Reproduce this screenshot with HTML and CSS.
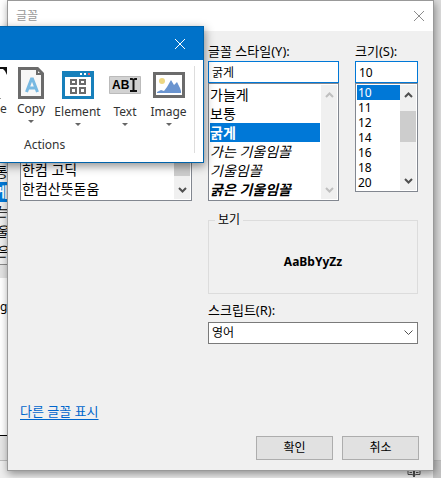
FILE: index.html
```
<!DOCTYPE html>
<html lang="ko">
<head>
<meta charset="utf-8">
<title>글꼴</title>
<link rel="stylesheet" href="styles.css">
</head>
<body>
<div class="desktop">
  <div class="behind" aria-hidden="true">
    <div class="behind-list">
      <span>통</span><span class="picked">게</span><span class="slant">는</span><span class="slant">울</span><span class="slant">은</span>
    </div>
    <div class="behind-band"></div>
    <div class="behind-page">g</div>
    <div class="behind-foot"></div>
    <div class="behind-status">
      <svg width="14" height="13" viewBox="0 0 14 13" fill="none" stroke="#505050"><path d="M1 1.500h4l2 1 2-1h4v9H9l-2 1-2-1H1zM2.500 4.500H5M2.500 6.500H5M2.500 8.500H5M9 4.500h2.500M9 6.500h2.500M9 8.500h2.500"/><path d="M7 2v11" stroke-width="2"/></svg>
    </div>
  </div>

  <main class="dialog">
    <header class="titlebar">
      <h1>글꼴</h1>
      <button class="close" aria-label="닫기"><svg width="12" height="12" viewBox="0 0 12 12" stroke="#8c8c8c"><path d="M1 1l10 10M11 1L1 11"/></svg></button>
    </header>
    <form class="body">
      <div class="columns">
        <div class="fonts">
          <ul class="list fonts-list">
            <li>한컴 고딕</li>
            <li>한컴산뜻돋움</li>
          </ul>
          <div class="scroll"><i class="thumb fonts-thumb"></i><svg class="down" width="9" height="6" viewBox="0 0 9 6"><path d="M1 1l3.500 3.500L8 1"/></svg></div>
        </div>
        <div class="field style-field">
          <label for="style">글꼴 스타일(Y):</label>
          <input id="style" value="굵게">
          <div class="listbox">
            <ul class="list">
              <li>가늘게</li>
              <li>보통</li>
              <li class="selected bold">굵게</li>
              <li class="slant">가는 기울임꼴</li>
              <li class="slant">기울임꼴</li>
              <li class="slant bold">굵은 기울임꼴</li>
            </ul>
            <div class="scroll disabled"><svg width="9" height="6" viewBox="0 0 9 6"><path d="M1 5l3.500-3.500L8 5"/></svg><svg class="down" width="9" height="6" viewBox="0 0 9 6"><path d="M1 1l3.500 3.500L8 1"/></svg></div>
          </div>
        </div>
        <div class="field size-field">
          <label for="size">크기(S):</label>
          <input id="size" value="10">
          <div class="listbox">
            <ul class="list sizes">
              <li class="selected">10</li><li>11</li><li>12</li><li>14</li><li>16</li><li>18</li><li>20</li>
            </ul>
            <div class="scroll"><svg width="9" height="6" viewBox="0 0 9 6"><path d="M1 5l3.500-3.500L8 5"/></svg><i class="thumb size-thumb"></i><svg class="down" width="9" height="6" viewBox="0 0 9 6"><path d="M1 1l3.500 3.500L8 1"/></svg></div>
          </div>
        </div>
      </div>
      <div class="lower">
        <fieldset class="preview">
          <legend>보기</legend>
          <p>AaBbYyZz</p>
        </fieldset>
        <label for="script">스크립트(R):</label>
        <div class="combo">
          <select id="script"><option>영어</option></select>
          <svg width="9" height="6" viewBox="0 0 9 6" fill="none" stroke="#505050"><path d="M.5.500l4 4 4-4"/></svg>
        </div>
      </div>
      <a class="more" href="#">다른 글꼴 표시</a>
      <div class="actions">
        <button type="button">확인</button>
        <button type="button">취소</button>
      </div>
    </form>
  </main>

  <section class="toolbox" aria-label="Actions">
    <header class="toolbox-bar">
      <button class="close" aria-label="Close"><svg width="12" height="12" viewBox="0 0 12 12" stroke="#fff"><path d="M1 1l10 10M11 1L1 11"/></svg></button>
    </header>
    <div class="group">
      <div class="tools">
        <button class="tool cut">
          <i class="pic"><svg width="7" height="32" viewBox="0 0 7 32"><path d="M0 0h7v8L5 4 3 2H0z" fill="#111"/><path d="M0 31.500h1" stroke="#999"/></svg></i>
          <span>e</span>
        </button>
        <button class="tool copy">
          <i class="pic"><svg width="26" height="32" viewBox="0 0 26 32"><path d="M1.500 1.500h18l5 5v24h-23z" fill="#f7f7f7" stroke="#6b6b6b" stroke-width="3"/><path d="M19 1v6h6" fill="none" stroke="#6b6b6b" stroke-width="2"/><path d="M8.500 25l5-13h1l5 13M10.500 21h7" fill="none" stroke="#78b9e2" stroke-width="3"/></svg></i>
          <span>Copy</span><i class="caret"></i>
        </button>
        <button class="tool">
          <i class="pic"><svg width="32" height="28" viewBox="0 0 32 28"><path d="M0 0h32v28H0z" fill="#1780bb"/><path d="M3 6h26v19H3z" fill="#fff"/><path d="M18 2h2v2h-2zM22 2h2v2h-2z" fill="#fff"/><path d="M26 2h2v2h-2z" fill="#ef5b66"/><path d="M9 9h5v4H9zM18 9h5v4h-5zM9 17h5v5H9zM18 17h5v5h-5z" fill="none" stroke="#6b6b6b" stroke-width="2"/></svg></i>
          <span>Element</span><i class="caret"></i>
        </button>
        <button class="tool">
          <i class="pic"><svg width="32" height="18" viewBox="0 0 32 18"><path d="M.5.500h31v17H.5z" fill="#d2d2d2" stroke="#bbb"/><text x="3" y="13" class="abi">AB</text><path d="M21 3h2l1.500 1L26 3h2M24.500 4v10M21 15h2l1.500-1 1.500 1h2" fill="none" stroke="#111" stroke-width="2"/></svg></i>
          <span>Text</span><i class="caret"></i>
        </button>
        <button class="tool">
          <i class="pic"><svg width="32" height="26" viewBox="0 0 32 26"><path d="M1.500 1.500h29v23h-29z" fill="#fff" stroke="#6b6b6b" stroke-width="3"/><circle cx="9" cy="9" r="3" fill="#edd782"/><path d="M4 21v-1l4-2 3 1 3-4 4-7 3 5 3-3 3 6 1 3v2z" fill="#6a94cf"/></svg></i>
          <span>Image</span><i class="caret"></i>
        </button>
      </div>
      <p class="group-name">Actions</p>
    </div>
  </section>
</div>
</body>
</html>
```
FILE: styles.css
```
* { box-sizing: border-box; }
body {
  margin: 0;
  font: 12px/16px "Noto Sans", "Noto Sans CJK KR", sans-serif;
  color: #000;
}
button, input, select { font: inherit; color: inherit; }
ul { margin: 0; padding: 0; list-style: none; }
h1, p { margin: 0; font-weight: 400; }
h1 { font-size: 12px; }

.desktop { position: relative; min-height: 100vh; overflow: hidden; }

.behind { display: flex; flex-direction: column; height: 100vh; padding-top: 162px; background: linear-gradient(90deg, #fff 0 50%, #dcdcdc 50%); }
.behind-list { width: 8px; height: 103px; overflow: hidden; background: #eee; border-bottom: 1px solid #888; font-size: 14px; }
.behind-list span { display: flex; justify-content: flex-end; height: 20px; align-items: center; }
.behind-list .picked { background: #0078d7; color: #fff; font-weight: 700; }
.behind-band { width: 8px; height: 13px; background: #e2e2e2; }
.behind-page { flex: 1; width: 8px; padding-top: 21px; }
.behind-foot { width: 8px; height: 25px; background: #e6e6e6; border-top: 1px solid #000; }
.behind-status { display: flex; justify-content: flex-end; align-items: flex-end; height: 18px; padding: 0 20px 1px; border-top: 1px solid #bbb; background: linear-gradient(270deg, #c4c4c4 0 8px, #eee 8px); }

.dialog {
  position: absolute;
  inset: 0 7px 7px;
  display: flex;
  flex-direction: column;
  background: #f0f0f0;
  border: 1px solid #999;
  box-shadow: 1px 3px 8px rgba(0, 0, 0, .4);
}
.titlebar { display: flex; justify-content: space-between; align-items: center; height: 30px; padding: 0 8px; background: #fff; color: #999; }
.close { display: flex; padding: 0; border: 0; background: none; }
.body { flex: 1; display: flex; flex-direction: column; padding: 12px 15px 10px 12px; }
.columns { display: grid; grid-template-columns: 172px 131px 63px; justify-content: space-between; align-items: start; }

label { display: block; height: 18px; font-size: 13px; }
input { display: block; width: 100%; height: 22px; padding: 0 3px; border: 1px solid #0078d7; background: #fff; outline: 0; }
.listbox, .fonts { display: flex; border: 1px solid #828790; background: #fff; padding: 1px; }
.fonts { margin-top: 110px; height: 48px; }
.list { flex: 1; overflow: hidden; font-size: 14px; line-height: 19px; }
.list li { white-space: nowrap; }
.fonts-list { padding-top: 5px; }
.style-field .listbox { height: 118px; }
.style-field .list { margin-right: 1px; }
.size-field .listbox { height: 109px; }
.sizes { font-size: 12px; line-height: 15px; }
.sizes li { height: 15px; padding-left: 1px; }
.selected { background: #0078d7; color: #fff; }
.bold { font-weight: 700; }
.slant { font-style: italic; }
.scroll { display: flex; flex-direction: column; align-items: center; width: 16px; padding: 7px 0 6px; background: #f0f0f0; }
.scroll svg { fill: none; stroke: #505050; stroke-width: 2; }
.disabled svg { stroke: #bfbfbf; }
.scroll .down { margin-top: auto; }
.thumb { display: block; width: 100%; background: #cdcdcd; }
.fonts .scroll { padding-top: 0; }
.fonts-thumb { height: 21px; }
.size-thumb { height: 31px; margin-top: 13px; }

.lower { align-self: flex-end; width: 210px; margin-top: 11px; }
.preview { display: flex; align-items: center; justify-content: center; height: 82px; margin: 0 0 8px; padding: 2px 0 0; border: 1px solid #dcdcdc; }
legend { margin-left: 6px; padding: 0 3px; }
.preview p { font-weight: 700; }
.lower label { height: 20px; }
.combo { display: flex; align-items: center; height: 22px; padding-right: 4px; border: 1px solid #7a7a7a; background: #fff; }
select { flex: 1; height: 20px; padding: 0 3px; border: 0; appearance: none; background: none; outline: 0; }

.more { align-self: flex-start; margin-top: 59px; color: #0066cc; font-size: 13px; text-underline-offset: 3px; }
.actions { display: flex; justify-content: flex-end; gap: 9px; margin-top: auto; margin-right: -1px; }
.actions button { width: 77px; height: 24px; padding: 0; border: 1px solid #adadad; background: #e1e1e1; }

.toolbox {
  position: absolute;
  top: 26px;
  left: 0;
  width: 204px;
  background: #fff;
  border: 1px solid #0063ab;
  border-left: 0;
  box-shadow: 1px 3px 9px rgba(0, 0, 0, .45);
  color: #333;
}
.toolbox-bar { display: flex; justify-content: flex-end; align-items: center; height: 33px; padding-right: 17px; background: #0072c9; }
.group { margin: 6px 8px 9px 0; border-right: 1px solid #ddd; }
.tools { display: grid; grid-template-columns: 7px 48px 45px 50px 37px; height: 65px; }
.tool { display: flex; flex-direction: column; align-items: center; justify-self: center; width: 48px; padding: 1px 0 0; border: 0; background: none; }
.tool span { margin-top: 2px; }
.pic { display: flex; align-items: center; height: 35px; }
.cut .pic, .copy .pic { height: 32px; }
.caret { margin-top: 3px; border: 3px solid transparent; border-top-color: #666; border-bottom: 0; }
.cut { width: 7px; }
.abi { font: 700 12px "Liberation Sans", sans-serif; }
.group-name { padding: 6px 0 0 24px; }
```
